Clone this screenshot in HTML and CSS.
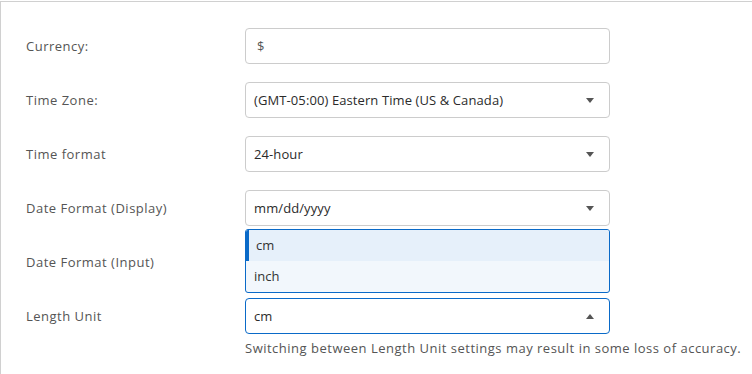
FILE: index.html
```html
<!DOCTYPE html>
<html lang="en">
<head>
  <meta charset="UTF-8" />
  <title>Preferences</title>
  <link rel="stylesheet" href="styles.css">
</head>
<body>

<div class="card">
  <div class="form-grid">
    <label class="form-label">Currency:</label>
    <div class="field">
      <div class="input currency">$</div>
    </div>

    <label class="form-label">Time Zone:</label>
    <div class="field">
      <div class="input select">(GMT-05:00) Eastern Time (US &amp; Canada)<span class="caret down"></span></div>
    </div>

    <label class="form-label">Time format</label>
    <div class="field">
      <div class="input select">24-hour<span class="caret down"></span></div>
    </div>

    <label class="form-label">Date Format (Display)</label>
    <div class="field">
      <div class="input select">mm/dd/yyyy<span class="caret down"></span></div>
    </div>

    <label class="form-label">Date Format (Input)</label>
    <div class="field">
      <!-- covered by the open Length Unit menu -->
      <div class="input select"><span class="caret down"></span></div>
    </div>

    <label class="form-label">Length Unit</label>
    <div class="field">
      <div class="menu">
        <div class="menu-item selected">cm</div>
        <div class="menu-item">inch</div>
      </div>
      <div class="input select open">cm<span class="caret up"></span></div>
      <p class="help">Switching between Length Unit settings may result in some loss of accuracy.</p>
    </div>
  </div>
</div>

</body>
</html>
```

FILE: styles.css
```css
body {
  margin: 0;
  overflow: hidden;
  font-family: 'Open Sans', sans-serif;
  font-size: 13px;
  color: #333;
  background: #fff;
}
.card {
  margin-top: 1px;
  width: 800px;
  height: 420px;
  border: 1px solid #d0d0d0;
  padding: 26px 0 0 25px;
  box-sizing: border-box;
}
.form-grid {
  display: grid;
  grid-template-columns: 219px 365px;
  row-gap: 18px;
  align-items: start;
}
.form-label {
  height: 36px;
  line-height: 36px;
  color: #555;
  letter-spacing: 0.5px;
}
.field {
  position: relative;
}
.input {
  position: relative;
  height: 36px;
  line-height: 34px;
  border: 1px solid #ccc;
  border-radius: 4px;
  box-sizing: border-box;
  padding: 0 8px;
  background: #fff;
  color: #2b2b2b;
  letter-spacing: 0.1px;
}
.currency {
  padding-left: 11px;
  color: #555;
}
.caret {
  position: absolute;
  right: 15px;
  top: 15px;
  width: 0;
  height: 0;
  border-left: 4px solid transparent;
  border-right: 4px solid transparent;
}
.caret.down {
  border-top: 5px solid #555;
}
.caret.up {
  border-bottom: 5px solid #555;
}
.input.open {
  border-color: #0a6ac8;
}
.menu {
  position: absolute;
  left: 0;
  right: 0;
  bottom: calc(100% + 5px);
  z-index: 1;
  border: 1px solid #0a6ac8;
  border-radius: 3px;
  overflow: hidden;
  background: #f2f7fc;
}
.menu-item {
  height: 31px;
  line-height: 31px;
  padding: 0 8px;
  color: #333;
}
.menu-item.selected {
  background: #e6f0fa;
  border-left: 3px solid #0a6ac8;
  padding-left: 7px;
}
.help {
  margin: 5px 0 0;
  color: #555;
  letter-spacing: 0.5px;
  white-space: nowrap;
}
```
